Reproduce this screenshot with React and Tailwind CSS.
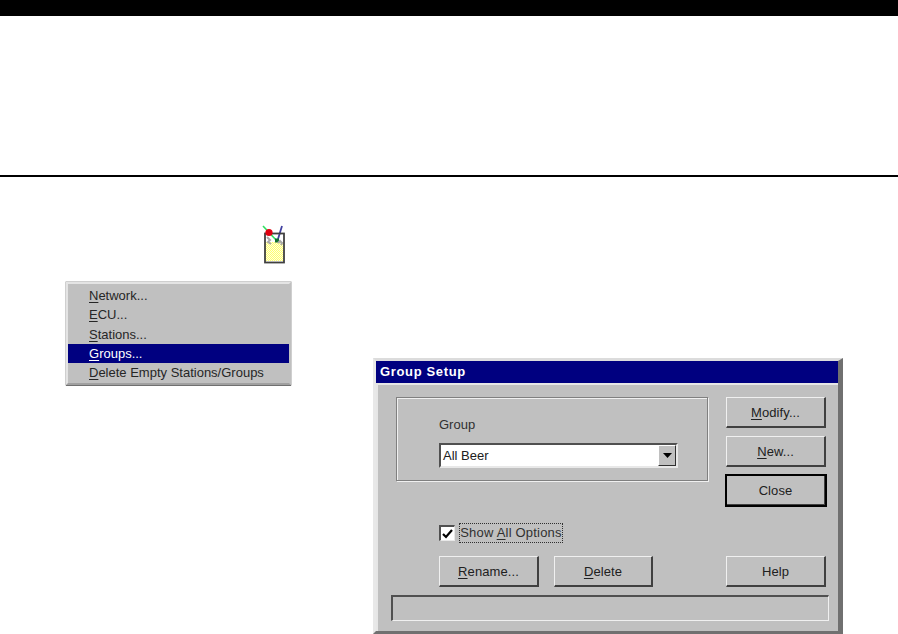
import React from "react";

const F = "[font-family:'Liberation_Sans',Arial,sans-serif]";

function Raised({ children, className = "" }) {
  return (
    <button
      className={`flex items-center justify-center pt-[2px] bg-[#c0c0c0] text-[13px] tracking-[0.1px] text-[#202020] border-t border-l border-t-[#f0f0f0] border-l-[#f0f0f0] border-r-2 border-b-2 border-r-[#404040] border-b-[#404040] ${className}`}
    >
      {children}
    </button>
  );
}

function MenuItem({ active, children }) {
  return (
    <div className={`h-[19.3px] flex items-center pl-[21px] text-[13px] ${active ? "bg-[#000080] text-white" : "text-[#262626]"}`}>
      <span>{children}</span>
    </div>
  );
}

function Glass() {
  return (
    <svg width="26" height="42" viewBox="0 0 26 42" className="block">
      <defs>
        <pattern id="dith" width="2" height="2" patternUnits="userSpaceOnUse">
          <rect width="2" height="2" fill="#ffff70" />
          <rect width="1" height="1" fill="#ffffe0" />
          <rect x="1" y="1" width="1" height="1" fill="#ffffe0" />
        </pattern>
      </defs>
      <rect x="3" y="10" width="18" height="28" fill="#fff" />
      <rect x="3" y="19" width="18" height="19" fill="url(#dith)" />
      <path d="M1 3 L15 18" stroke="#30e060" strokeWidth="1.6" />
      <path d="M20 3 L16 16" stroke="#4040a0" strokeWidth="1.8" />
      <rect x="13" y="15.5" width="4" height="4" fill="#107030" />
      <path d="M5 14 l3 3 -2 2 3 2 M16 20 l2 -2 2 2 -1 2" stroke="#a8a8a8" strokeWidth="2" fill="none" />
      <rect x="3" y="10.5" width="19" height="29" fill="none" stroke="#404040" strokeWidth="1.8" />
      <circle cx="7" cy="9.5" r="3.6" fill="#e00010" />
    </svg>
  );
}

export default function App() {
  return (
    <div className={`w-[898px] h-[634px] bg-white overflow-hidden flex flex-col ${F}`}>
      <div className="h-4 bg-black shrink-0" />
      <div className="h-0.5 bg-black mt-[159px] shrink-0" />
      <div className="flex items-start">
        <div className="ml-[66px] w-[225px] shrink-0 flex flex-col mt-[46px]">
          <div className="flex justify-end pr-[3px] h-[59px]">
            <Glass />
          </div>
          <div className="h-[103px] bg-[#c0c0c0] border-2 border-t-[#e4e4e4] border-l-[#e4e4e4] border-r-[#c0c0c0] border-b-[#a0a0a0] shadow-[0_0_0_0.5px_#a0a0a0,0_1px_0_#404040] pt-[2px] overflow-hidden whitespace-nowrap">
            <MenuItem><u className="underline-offset-2">N</u>etwork...</MenuItem>
            <MenuItem><u className="underline-offset-2">E</u>CU...</MenuItem>
            <MenuItem><u className="underline-offset-2">S</u>tations...</MenuItem>
            <MenuItem active><u className="underline-offset-2">G</u>roups...</MenuItem>
            <MenuItem><u className="underline-offset-2">D</u>elete Empty Stations/Groups</MenuItem>
          </div>
        </div>

        <div className="ml-[82px] mt-[181px] w-[470px] h-[276px] shrink-0 bg-[#c0c0c0] border-t-[3px] border-l-[3px] border-r-[5px] border-b-[3px] border-t-[#dcdcdc] border-l-[#e8e8e8] border-r-[#707070] border-b-[#707070] flex flex-col">
          <div className="h-[22px] bg-[#000080] text-white font-bold text-[13px] tracking-[0.65px] flex items-center pl-[4px] shrink-0">
            Group Setup
          </div>
          <div className="flex-1 border-t-2 border-l-2 border-white/60 flex flex-col">
            <div className="flex mt-[12px] ml-[18px]">
              <div className="w-[312px] h-[84px] border border-[#808080] shadow-[1px_1px_0_#f0f0f0,inset_1px_1px_0_#f0f0f0] pl-[42px] pt-[19px]">
                <div className="text-[13px] text-[#303030] leading-[15px]">Group</div>
                <div className="mt-[11px] w-[239px] h-[25px] flex bg-white border-t-2 border-l-2 border-t-[#505050] border-l-[#505050] border-b-2 border-r-2 border-b-[#e8e8e8] border-r-[#e8e8e8] p-0">
                  <div className="flex-1 pl-[2px] text-[13px] leading-[21px] text-[#202020]">All Beer</div>
                  <div className="w-[18px] h-[21px] bg-[#c0c0c0] border-t border-l border-t-white border-l-white border-r border-b border-r-[#303030] border-b-[#303030] flex items-center justify-center">
                    <svg width="9" height="5" viewBox="0 0 9 5"><path d="M0 0 H9 L4.5 5 Z" fill="#000" /></svg>
                  </div>
                </div>
              </div>
              <div className="ml-[18px] w-[100px] flex flex-col gap-2">
                <Raised className="h-[31px]"><span><u className="underline-offset-2">M</u>odify...</span></Raised>
                <Raised className="h-[31px]"><span><u className="underline-offset-2">N</u>ew...</span></Raised>
                <Raised className="h-[31px] outline-2 -outline-offset-1 outline-black">Close</Raised>
              </div>
            </div>

            <div className="flex items-center ml-[61px] mt-[17px] h-5">
              <div className="w-4 h-4 bg-white border-t-2 border-l-2 border-t-[#505050] border-l-[#505050] border-b border-r border-b-[#e8e8e8] border-r-[#e8e8e8] flex items-center justify-center">
                <svg width="11" height="10" viewBox="0 0 11 10"><path d="M1 5 L4 8 L10 1" stroke="#000" strokeWidth="2.2" fill="none" /></svg>
              </div>
              <div className="ml-1 w-[104px] h-5 border border-dotted border-[#303030] flex items-center justify-center text-[13px] tracking-[0.2px] text-[#303030] whitespace-nowrap">
                <span>Show <u className="underline-offset-2">A</u>ll Options</span>
              </div>
            </div>

            <div className="flex ml-[61px] mt-[13px]">
              <Raised className="w-[100px] h-[31px]"><span><u className="underline-offset-2">R</u>ename...</span></Raised>
              <Raised className="ml-[15px] w-[99px] h-[31px]"><span><u className="underline-offset-2">D</u>elete</span></Raised>
              <Raised className="ml-[73px] w-[100px] h-[31px]">Help</Raised>
            </div>

            <div className="mt-2 ml-[13px] w-[438px] h-[26px] border-t-2 border-l-2 border-t-[#505050] border-l-[#505050] border-b border-r border-b-[#f0f0f0] border-r-[#f0f0f0]" />
          </div>
        </div>
      </div>
    </div>
  );
}
